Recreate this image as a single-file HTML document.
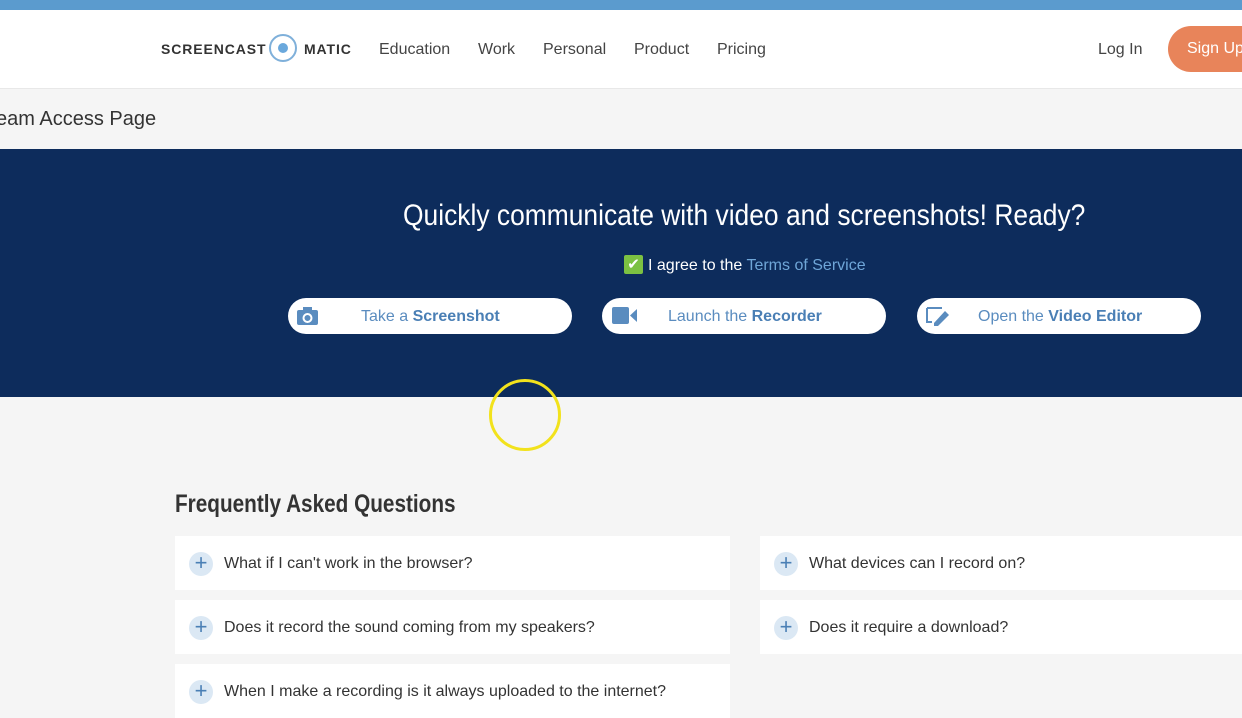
<!DOCTYPE html>
<html><head><style>
body{margin:0;width:1242px;height:698px;overflow:hidden;background:#f5f5f5;font-family:"Liberation Sans",sans-serif;position:relative}
.a{position:absolute}
.top{left:0;top:0;width:1242px;height:10px;background:#5b9bce}
.nav{left:0;top:10px;width:1242px;height:78px;background:#fff;border-bottom:1px solid #e8e8e8}
.nav span{position:absolute;top:30px;font-size:16px;color:#444}
.hero{left:0;top:149px;width:1242px;height:248px;background:#0d2c5c}
.btn{position:absolute;top:298px;height:36px;background:#fff;border-radius:18px;width:284px;color:#5a8cbf;font-size:16px;line-height:36px}
.btn b{color:#4a7fb5}
.card{position:absolute;background:#fff;height:54px;font-size:16px;color:#333}
.card .p{position:absolute;left:14px;top:16px;width:24px;height:24px;border-radius:12px;background:#dbe8f4;color:#4a7fb5;text-align:center;line-height:22px;font-size:22px}
.card .t{position:absolute;left:49px;top:19px}
</style></head><body>
<div class="a top"></div>
<div class="a nav">
<div class="a" style="left:161px;top:31px;font-size:14px;font-weight:bold;letter-spacing:0.9px;color:#333">SCREENCAST</div>
<div class="a" style="left:269px;top:24px;width:28px;height:28px;border:2px solid #7fb0da;border-radius:50%;box-sizing:border-box"></div>
<div class="a" style="left:278px;top:33px;width:10px;height:10px;background:#6aa8dc;border-radius:50%"></div>
<div class="a" style="left:304px;top:31px;font-size:14px;font-weight:bold;letter-spacing:0.9px;color:#333">MATIC</div>
<span style="left:379px;top:31px">Education</span><span style="left:478px;top:31px">Work</span><span style="left:543px;top:31px">Personal</span><span style="left:634px;top:31px">Product</span><span style="left:717px;top:31px">Pricing</span>
<span style="left:1098px;top:31px">Log In</span>
<div class="a" style="left:1168px;top:16px;width:100px;height:46px;border-radius:23px;background:#e8845a;color:#fff;font-size:16px;line-height:46px;padding-left:19px;box-sizing:border-box">Sign Up</div>
</div>
<div class="a" style="left:-4px;top:108px;font-size:20px;color:#333">eam Access Page</div>
<div class="a hero"></div>
<div class="a" style="left:403px;top:199px;font-size:30px;color:#fff;white-space:nowrap;transform:scaleX(0.88);transform-origin:0 0">Quickly communicate with video and screenshots! Ready?</div>
<div class="a" style="left:624px;top:255px;width:19px;height:19px;background:#7cc142;border-radius:2px;color:#fff;font-size:15px;line-height:19px;text-align:center">✔</div>
<div class="a" style="left:648px;top:257px;font-size:16px;color:#fff">I agree to the <span style="color:#6fa6d8">Terms of Service</span></div>
<div class="btn" style="left:288px"><svg class="a" style="left:9px;top:9px" width="21" height="18"><rect x="0" y="3" width="21" height="15" rx="2" fill="#5a8cbf"/><rect x="6" y="0" width="9" height="5" fill="#5a8cbf"/><circle cx="10.5" cy="11" r="4" fill="none" stroke="#fff" stroke-width="2"/></svg><span style="position:absolute;left:73px;top:1px">Take a <b>Screenshot</b></span></div>
<div class="btn" style="left:602px"><svg class="a" style="left:10px;top:9px" width="25" height="17"><rect x="0" y="0" width="17" height="17" rx="2" fill="#5a8cbf"/><path d="M18 8.5 L25 2 V15Z" fill="#5a8cbf"/></svg><span style="position:absolute;left:66px;top:1px">Launch the <b>Recorder</b></span></div>
<div class="btn" style="left:917px"><svg class="a" style="left:9px;top:8px" width="24" height="20"><path d="M1 2H16M1 2V16H6" stroke="#5a8cbf" stroke-width="2" fill="none"/><path d="M8 17L19 5L23 9L12 20H8Z" fill="#5a8cbf"/></svg><span style="position:absolute;left:61px;top:1px">Open the <b>Video Editor</b></span></div>
<div class="a" style="left:489px;top:379px;width:66px;height:66px;border:3px solid #f2e21c;border-radius:50%"></div>
<div class="a" style="left:175px;top:490px;font-weight:bold;font-size:25px;color:#333;white-space:nowrap;transform:scaleX(0.83);transform-origin:0 0">Frequently Asked Questions</div>
<div class="card" style="left:175px;top:536px;width:555px"><div class="p">+</div><div class="t">What if I can't work in the browser?</div></div>
<div class="card" style="left:760px;top:536px;width:500px"><div class="p">+</div><div class="t">What devices can I record on?</div></div>
<div class="card" style="left:175px;top:600px;width:555px"><div class="p">+</div><div class="t">Does it record the sound coming from my speakers?</div></div>
<div class="card" style="left:760px;top:600px;width:500px"><div class="p">+</div><div class="t">Does it require a download?</div></div>
<div class="card" style="left:175px;top:664px;width:555px"><div class="p">+</div><div class="t">When I make a recording is it always uploaded to the internet?</div></div>
</body></html>
